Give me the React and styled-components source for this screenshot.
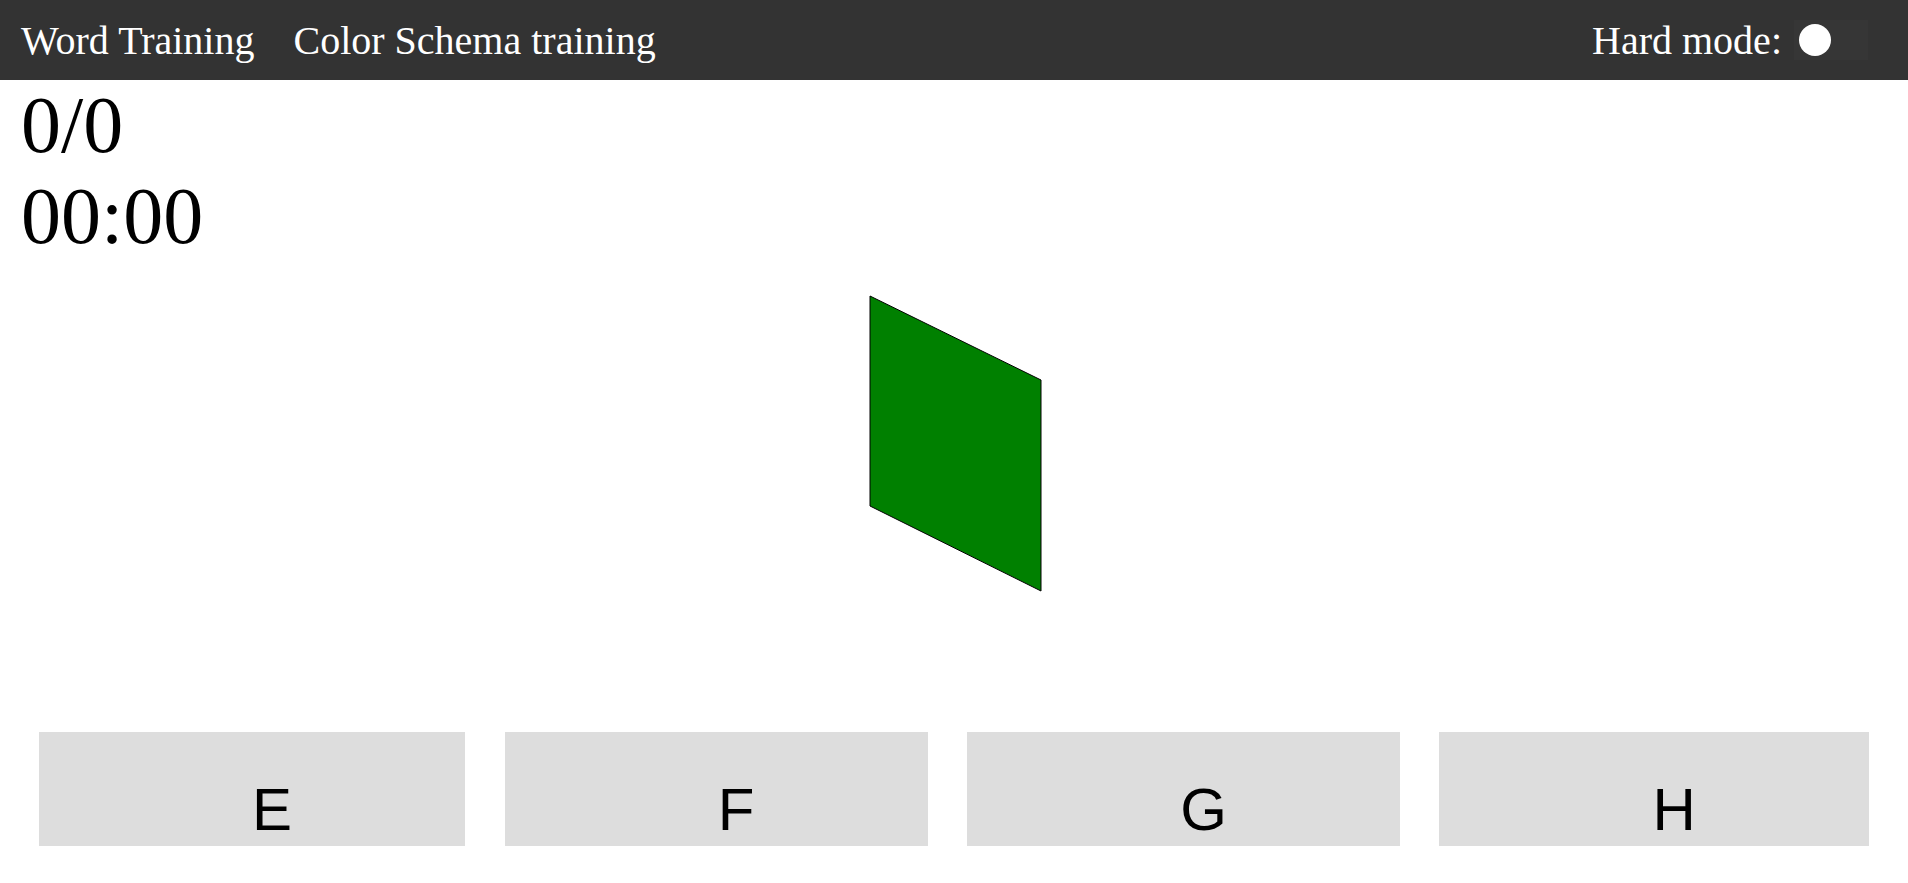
import React from 'react'
import styled, { createGlobalStyle } from 'styled-components';

const GlobalStyle = createGlobalStyle`
  html, body {
    margin: 0;
    padding: 0;
    background: #fff;
  }
  body {
    font-family: "Liberation Serif", "Times New Roman", serif;
  }
`;

const Page = styled.div`
  display: flex;
  flex-direction: column;
  height: 100vh;
  overflow: hidden;
`;

const Header = styled.header`
  display: flex;
  align-items: center;
  height: 80px;
  padding: 0 40px 0 21px;
  background-color: #333;
  color: #fff;
  box-sizing: border-box;
`;

const NavLink = styled.a`
  font-size: 40px;
  color: #fff;
  text-decoration: none;
  margin-right: 39px;
  cursor: pointer;
`;

const Spacer = styled.div`
  flex: 1;
`;

const ModeLabel = styled.span`
  font-size: 40px;
  margin-right: 12px;
`;

const Switch = styled.div`
  display: flex;
  align-items: center;
  width: 74px;
  height: 40px;
  padding: 0 5px;
  box-sizing: border-box;
  background-color: #363636;
`;

const Knob = styled.div`
  width: 32px;
  height: 32px;
  border-radius: 50%;
  background-color: #fff;
`;

const Stats = styled.div`
  padding-left: 21px;
  font-size: 80px;
  color: #000;
`;

const StatLine = styled.div`
  line-height: 91px;
`;

const ShapeArea = styled.div`
  flex: 1;
  display: flex;
  justify-content: center;
  align-items: flex-start;
  padding-top: 33px;
`;

const ShapeSvg = styled.svg`
  display: block;
  margin-left: 3px;
`;

const Answers = styled.div`
  display: flex;
  gap: 39.5px;
  padding: 0 39px;
  margin-bottom: 37px;
`;

const AnswerButton = styled.button`
  flex: 1 1 auto;
  height: 114px;
  box-sizing: border-box;
  padding: 40px 0 0 40px;
  border: none;
  background-color: #ddd;
  font-family: "Liberation Sans", Arial, sans-serif;
  font-size: 60px;
  line-height: normal;
  color: #000;
  text-align: center;
  vertical-align: top;
  cursor: pointer;
`;

const answers = ['E', 'F', 'G', 'H'];

const App = () => {
  return (
    <Page>
      <GlobalStyle />
      <Header>
        <NavLink>Word Training</NavLink>
        <NavLink>Color Schema training</NavLink>
        <Spacer />
        <ModeLabel>Hard mode:</ModeLabel>
        <Switch>
          <Knob />
        </Switch>
      </Header>

      <Stats>
        <StatLine>0/0</StatLine>
        <StatLine>00:00</StatLine>
      </Stats>

      <ShapeArea>
        <ShapeSvg width="173" height="297" viewBox="0 0 173 297">
          <polygon
            points="1,1 172,85 172,296 1,211"
            fill="#008000"
            stroke="#000"
            strokeWidth="1"
          />
        </ShapeSvg>
      </ShapeArea>

      <Answers>
        {answers.map(a => (
          <AnswerButton key={a}>{a}</AnswerButton>
        ))}
      </Answers>
    </Page>
  )
}

export default App;
